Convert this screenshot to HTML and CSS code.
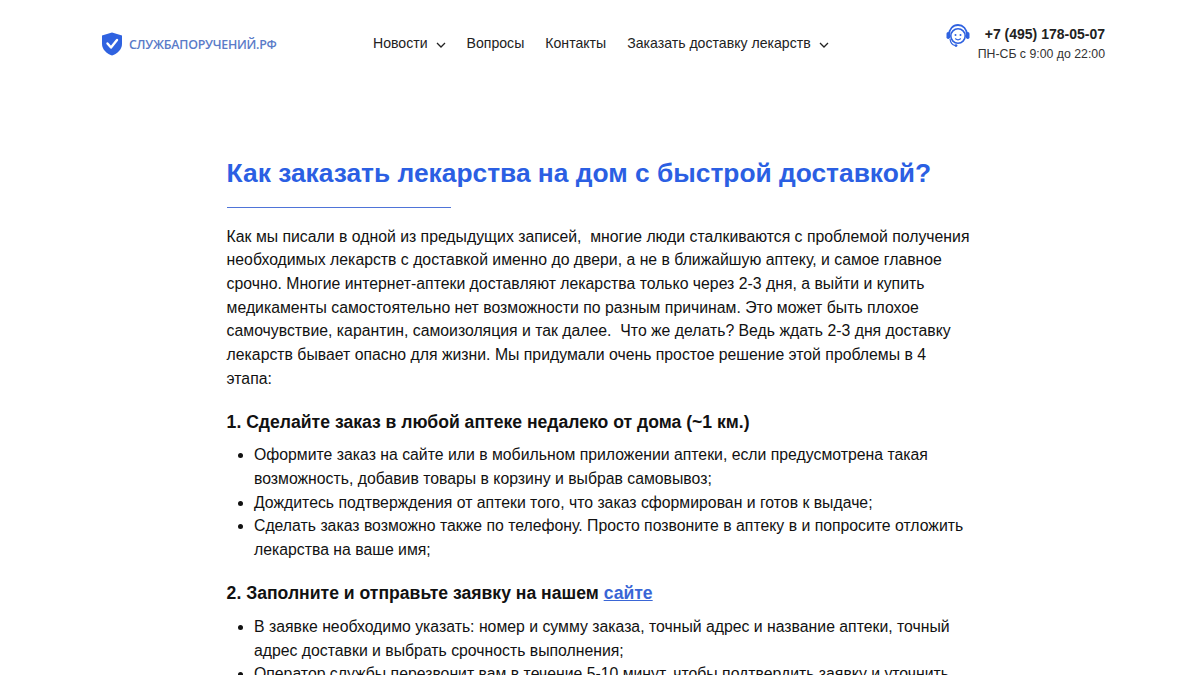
FILE: index.html
```html
<!DOCTYPE html>
<html lang="ru">
<head>
    <meta charset="UTF-8">
    <meta name="viewport" content="width=device-width, initial-scale=1.0">
    <title>Как заказать лекарства на дом с быстрой доставкой?</title>
    <link rel="stylesheet" href="styles.css">
</head>
<body>
    <header class="site-header">
        <a class="logo" href="#">
            <svg class="logo-icon" viewBox="0 0 22 24" width="22" height="24">
                <path d="M11 0.5 L21 3.5 V12 C21 17.5 16.5 21.5 11 23.5 C5.5 21.5 1 17.5 1 12 V3.5 Z" fill="#2f62e0"/>
                <path d="M6.5 11.5 L10 15.5 L16 8" fill="none" stroke="#fff" stroke-width="2.4" stroke-linecap="round" stroke-linejoin="round"/>
            </svg>
            <span class="logo-text">СЛУЖБАПОРУЧЕНИЙ.РФ</span>
        </a>
        <nav class="main-nav">
            <a href="#">Новости
                <svg class="chevron" viewBox="0 0 10 6" width="10" height="6"><path d="M1 1 L5 5 L9 1" fill="none" stroke="#222" stroke-width="1.3"/></svg>
            </a>
            <a href="#">Вопросы</a>
            <a href="#">Контакты</a>
            <a href="#">Заказать доставку лекарств
                <svg class="chevron" viewBox="0 0 10 6" width="10" height="6"><path d="M1 1 L5 5 L9 1" fill="none" stroke="#222" stroke-width="1.3"/></svg>
            </a>
        </nav>
        <div class="contact">
            <svg class="contact-icon" viewBox="0 0 24 24" width="24" height="24">
                <path d="M3 11 C3 5 7 1 12 1 C17 1 21 5 21 11" fill="none" stroke="#2f62e0" stroke-width="1.8"/>
                <rect x="0.5" y="8" width="3.5" height="7" rx="1.7" fill="#2f62e0"/>
                <rect x="20" y="8" width="3.5" height="7" rx="1.7" fill="#2f62e0"/>
                <circle cx="12" cy="12" r="7.2" fill="none" stroke="#2f62e0" stroke-width="1.6"/>
                <circle cx="9.5" cy="11" r="1" fill="#2f62e0"/>
                <circle cx="14.5" cy="11" r="1" fill="#2f62e0"/>
                <path d="M9.5 14.8 C11 16 13 16 14.5 14.8" fill="none" stroke="#2f62e0" stroke-width="1.2" stroke-linecap="round"/>
                <path d="M4 15 C4.5 19 6.5 21 9 21.5" fill="none" stroke="#2f62e0" stroke-width="1.2"/>
                <circle cx="10" cy="21.6" r="1.4" fill="#2f62e0"/>
            </svg>
            <div class="contact-info">
                <div class="phone">+7 (495) 178-05-07</div>
                <div class="hours">ПН-СБ с 9:00 до 22:00</div>
            </div>
        </div>
    </header>

    <main class="article">
        <h1>Как заказать лекарства на дом с быстрой доставкой?</h1>
        <div class="title-line"></div>
        <p>Как мы писали в одной из предыдущих записей,&nbsp; многие люди сталкиваются с проблемой получения необходимых лекарств с доставкой именно до двери, а не в ближайшую аптеку, и самое главное срочно. Многие интернет-аптеки доставляют лекарства только через 2-3 дня, а выйти и купить медикаменты самостоятельно нет возможности по разным причинам. Это может быть плохое самочувствие, карантин, самоизоляция и так далее.&nbsp; Что же делать? Ведь ждать 2-3 дня доставку лекарств бывает опасно для жизни. Мы придумали очень простое решение этой проблемы в 4 этапа:</p>

        <h2>1. Сделайте заказ в любой аптеке недалеко от дома (~1 км.)</h2>
        <ul>
            <li>Оформите заказ на сайте или в мобильном приложении аптеки, если предусмотрена такая возможность, добавив товары в корзину и выбрав самовывоз;</li>
            <li>Дождитесь подтверждения от аптеки того, что заказ сформирован и готов к выдаче;</li>
            <li>Сделать заказ возможно также по телефону. Просто позвоните в аптеку в и попросите отложить лекарства на ваше имя;</li>
        </ul>

        <h2>2. Заполните и отправьте заявку на нашем <a href="#">сайте</a></h2>
        <ul>
            <li>В заявке необходимо указать: номер и сумму заказа, точный адрес и название аптеки, точный адрес доставки и выбрать срочность выполнения;</li>
            <li>Оператор службы перезвонит вам в течение 5-10 минут, чтобы подтвердить заявку и уточнить детали;</li>
        </ul>
    </main>
</body>
</html>
```

FILE: styles.css
```css
* {
    margin: 0;
    padding: 0;
    box-sizing: border-box;
}

html, body {
    height: 100%;
    overflow: hidden;
}

body {
    font-family: 'Liberation Sans', Arial, sans-serif;
    background: #fff;
    color: #111;
}

a {
    color: inherit;
    text-decoration: none;
}

.site-header {
    display: flex;
    align-items: flex-start;
    height: 80px;
    padding: 24px 95px 0 101px;
}

.logo {
    display: flex;
    align-items: center;
    gap: 6px;
    width: 178px;
    margin-top: 8px;
}

.logo-text {
    font-family: 'Open Sans', sans-serif;
    font-size: 12.4px;
    font-weight: 600;
    color: #5a7bc8;
    letter-spacing: -0.25px;
    white-space: nowrap;
}

.main-nav {
    display: flex;
    gap: 21px;
    margin-left: 94px;
    margin-top: 11px;
    font-size: 14.1px;
    line-height: 17px;
    color: #222;
}

.main-nav a {
    display: flex;
    align-items: center;
}

.chevron {
    margin-left: 8px;
    margin-top: 2px;
}

.contact {
    display: flex;
    align-items: flex-start;
    gap: 8px;
    margin-left: auto;
}

.contact-info {
    text-align: right;
}

.phone {
    font-size: 14px;
    font-weight: 700;
    line-height: 20px;
    color: #222;
}

.hours {
    font-size: 12.3px;
    line-height: 20px;
    color: #333;
}

.article {
    width: 746px;
    margin-left: 226.6px;
    padding-top: 77px;
}

h1 {
    font-size: 26.35px;
    line-height: 32px;
    font-weight: 700;
    color: #2b5fe3;
}

.title-line {
    width: 224px;
    height: 1px;
    margin-top: 18px;
    margin-bottom: 16.6px;
    background: #4f74d8;
}

p {
    font-size: 15.8px;
    line-height: 23.7px;
    color: #111;
}

li {
    font-size: 15.8px;
    line-height: 23.9px;
    color: #111;
}

h2 {
    font-size: 17.6px;
    line-height: 24px;
    font-weight: 700;
    color: #111;
    margin-top: 19px;
    margin-bottom: 9.2px;
}

h2 a {
    color: #3a66d6;
    text-decoration: underline;
}

ul {
    padding-left: 27.4px;
    margin-bottom: 19.2px;
}
```
